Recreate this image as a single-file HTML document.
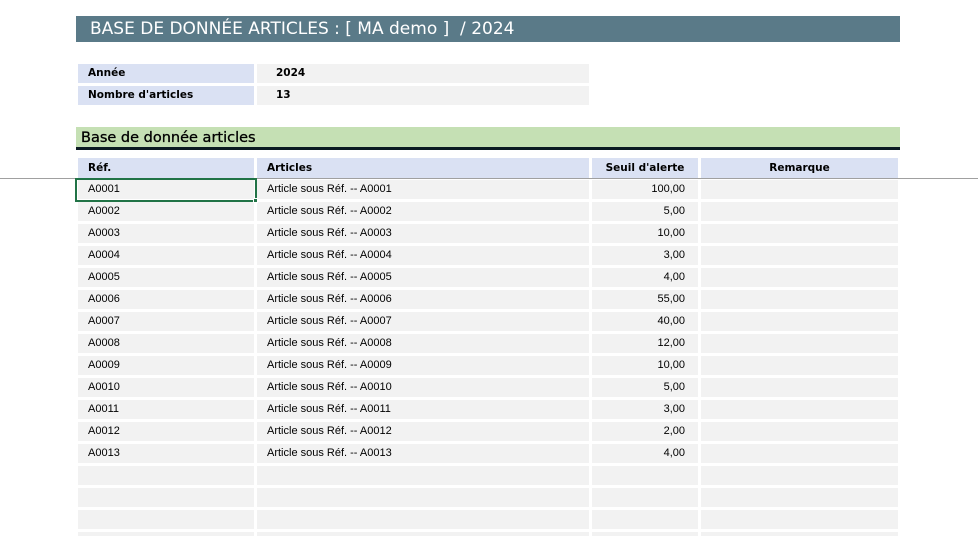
<!DOCTYPE html>
<html><head><meta charset="utf-8"><style>
body{margin:0;width:978px;height:536px;background:#fff;position:relative;overflow:hidden;font-family:"Liberation Sans",Arial,sans-serif;font-size:11px;color:#000}
div{position:absolute;box-sizing:border-box}
.t{font-family:"DejaVu Sans",Verdana,sans-serif}
.h{background:#dae1f3;font-weight:bold;font-family:"DejaVu Sans",Verdana,sans-serif;font-size:10.5px;line-height:20px;height:20px;top:158px}
.g{background:#f2f2f2;height:19px;line-height:19px}
.c1{left:78px;width:176px;padding-left:10px}
.c2{left:257px;width:332px;padding-left:10px}
.c3{left:592px;width:106px;text-align:right;padding-right:13px}
.c4{left:701px;width:197px}
</style></head><body>
<div class="t" style="left:76px;top:16px;width:824px;height:26px;background:#5a7a88;color:#fff;font-size:17px;line-height:26px;padding-left:14px">BASE DE DONNÉE ARTICLES : [ MA demo ]&nbsp; / 2024</div>
<div class="t" style="left:78px;top:64px;width:176px;height:19px;background:#dae1f3;font-weight:bold;font-size:10.5px;line-height:19px;padding-left:10px">Année</div>
<div class="t" style="left:257px;top:64px;width:332px;height:19px;background:#f2f2f2;font-weight:bold;font-size:10.5px;line-height:19px;padding-left:19px">2024</div>
<div class="t" style="left:78px;top:86px;width:176px;height:19px;background:#dae1f3;font-weight:bold;font-size:10.5px;line-height:19px;padding-left:10px">Nombre d'articles</div>
<div class="t" style="left:257px;top:86px;width:332px;height:19px;background:#f2f2f2;font-weight:bold;font-size:10.5px;line-height:19px;padding-left:19px">13</div>
<div class="t" style="left:76px;top:127px;width:824px;height:20px;background:#c5e0b4;font-size:14.5px;line-height:23px;padding-left:5px;-webkit-text-stroke:0.3px #000">Base de donnée articles</div>
<div style="left:76px;top:147px;width:824px;height:3px;background:#0b1a22"></div>
<div class="h c1">Réf.</div>
<div class="h c2">Articles</div>
<div class="h c3" style="text-align:center;padding-right:0">Seuil d'alerte</div>
<div class="h c4" style="text-align:center">Remarque</div>
<div style="left:0;top:178px;width:978px;height:1px;background:#a0a0a0"></div>

<div class="g c1" style="top:180px">A0001</div><div class="g c2" style="top:180px">Article sous Réf. -- A0001</div><div class="g c3" style="top:180px">100,00</div><div class="g c4" style="top:180px"></div>
<div class="g c1" style="top:202px">A0002</div><div class="g c2" style="top:202px">Article sous Réf. -- A0002</div><div class="g c3" style="top:202px">5,00</div><div class="g c4" style="top:202px"></div>
<div class="g c1" style="top:224px">A0003</div><div class="g c2" style="top:224px">Article sous Réf. -- A0003</div><div class="g c3" style="top:224px">10,00</div><div class="g c4" style="top:224px"></div>
<div class="g c1" style="top:246px">A0004</div><div class="g c2" style="top:246px">Article sous Réf. -- A0004</div><div class="g c3" style="top:246px">3,00</div><div class="g c4" style="top:246px"></div>
<div class="g c1" style="top:268px">A0005</div><div class="g c2" style="top:268px">Article sous Réf. -- A0005</div><div class="g c3" style="top:268px">4,00</div><div class="g c4" style="top:268px"></div>
<div class="g c1" style="top:290px">A0006</div><div class="g c2" style="top:290px">Article sous Réf. -- A0006</div><div class="g c3" style="top:290px">55,00</div><div class="g c4" style="top:290px"></div>
<div class="g c1" style="top:312px">A0007</div><div class="g c2" style="top:312px">Article sous Réf. -- A0007</div><div class="g c3" style="top:312px">40,00</div><div class="g c4" style="top:312px"></div>
<div class="g c1" style="top:334px">A0008</div><div class="g c2" style="top:334px">Article sous Réf. -- A0008</div><div class="g c3" style="top:334px">12,00</div><div class="g c4" style="top:334px"></div>
<div class="g c1" style="top:356px">A0009</div><div class="g c2" style="top:356px">Article sous Réf. -- A0009</div><div class="g c3" style="top:356px">10,00</div><div class="g c4" style="top:356px"></div>
<div class="g c1" style="top:378px">A0010</div><div class="g c2" style="top:378px">Article sous Réf. -- A0010</div><div class="g c3" style="top:378px">5,00</div><div class="g c4" style="top:378px"></div>
<div class="g c1" style="top:400px">A0011</div><div class="g c2" style="top:400px">Article sous Réf. -- A0011</div><div class="g c3" style="top:400px">3,00</div><div class="g c4" style="top:400px"></div>
<div class="g c1" style="top:422px">A0012</div><div class="g c2" style="top:422px">Article sous Réf. -- A0012</div><div class="g c3" style="top:422px">2,00</div><div class="g c4" style="top:422px"></div>
<div class="g c1" style="top:444px">A0013</div><div class="g c2" style="top:444px">Article sous Réf. -- A0013</div><div class="g c3" style="top:444px">4,00</div><div class="g c4" style="top:444px"></div>
<div class="g c1" style="top:466px"></div><div class="g c2" style="top:466px"></div><div class="g c3" style="top:466px"></div><div class="g c4" style="top:466px"></div>
<div class="g c1" style="top:488px"></div><div class="g c2" style="top:488px"></div><div class="g c3" style="top:488px"></div><div class="g c4" style="top:488px"></div>
<div class="g c1" style="top:510px"></div><div class="g c2" style="top:510px"></div><div class="g c3" style="top:510px"></div><div class="g c4" style="top:510px"></div>
<div class="g c1" style="top:532px;height:4px"></div><div class="g c2" style="top:532px;height:4px"></div><div class="g c3" style="top:532px;height:4px"></div><div class="g c4" style="top:532px;height:4px"></div>

<div style="left:75px;top:178px;width:182px;height:24px;border:2px solid #217346"></div>
<div style="left:253px;top:198px;width:5px;height:5px;background:#217346;border:1px solid #fff"></div>
</body></html>
